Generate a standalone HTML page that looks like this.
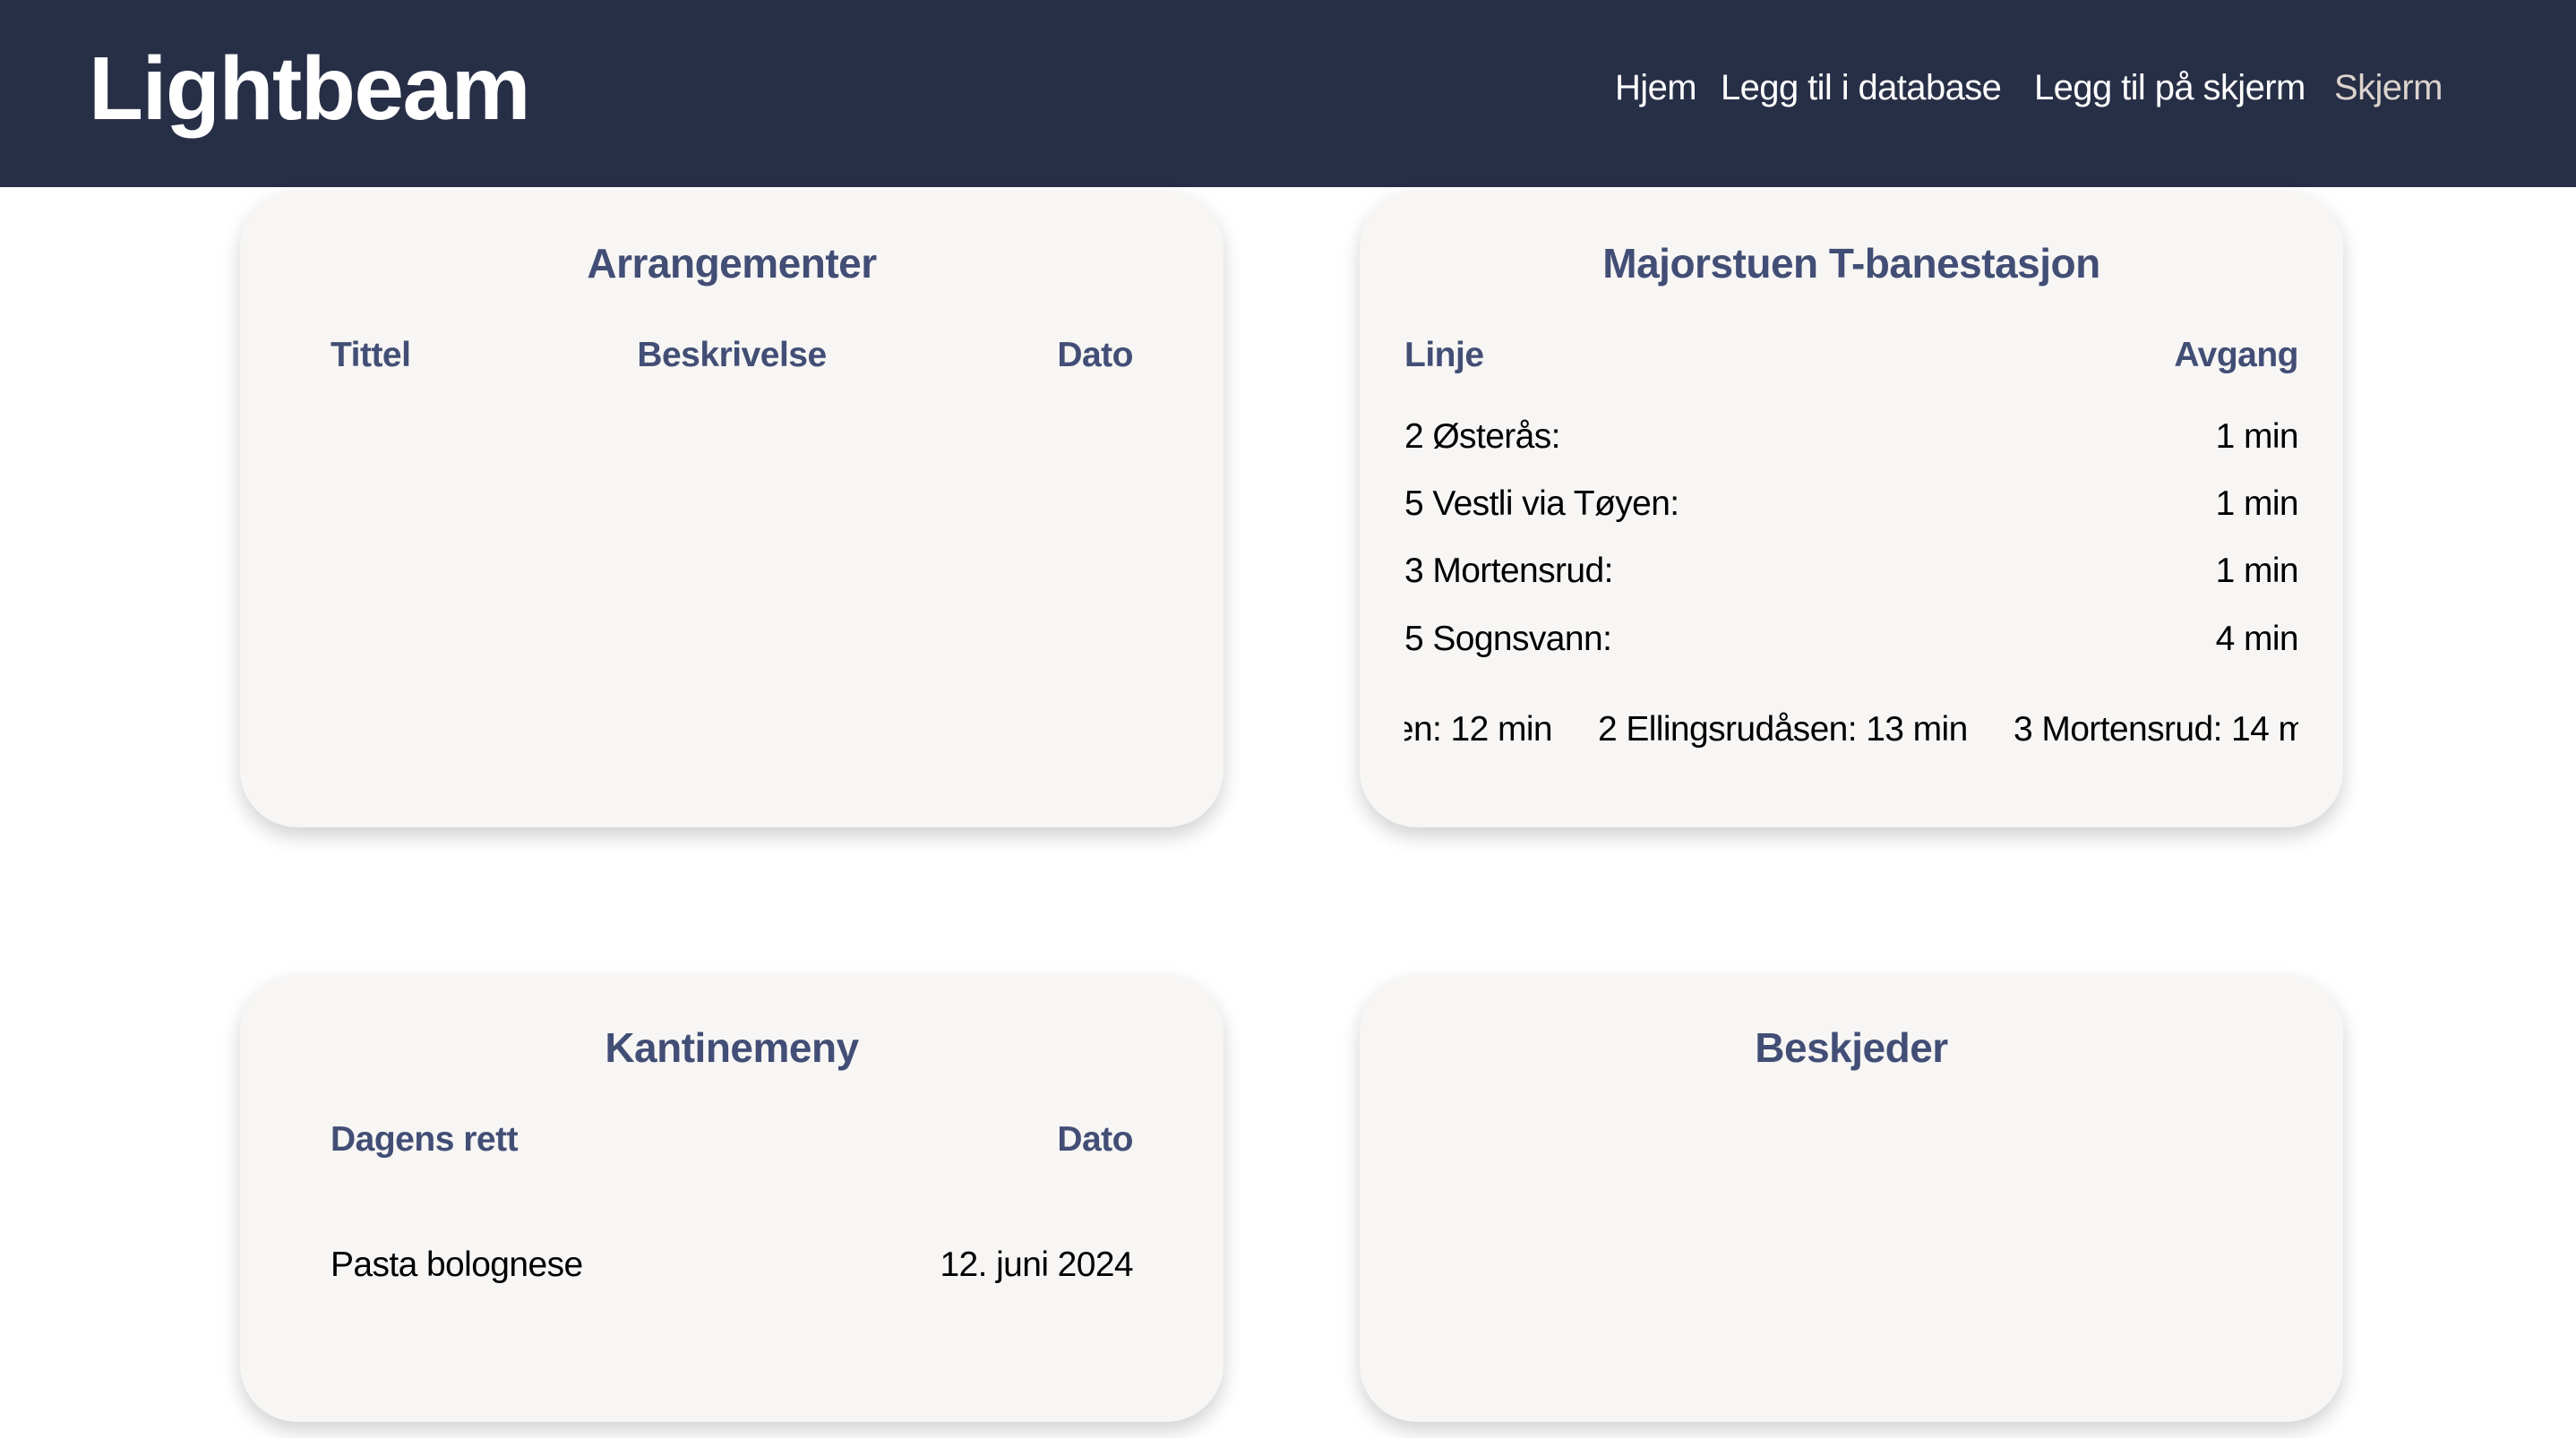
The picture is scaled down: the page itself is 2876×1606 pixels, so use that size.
<!DOCTYPE html>
<html><head><meta charset="utf-8"><style>
*{margin:0;padding:0;box-sizing:border-box}
body{width:2876px;height:1606px;background:#fff;font-family:"Liberation Sans",sans-serif;position:relative;overflow:hidden}
.hdr{position:absolute;left:0;top:0;width:2876px;height:209px;background:#272f47}
.logo{position:absolute;left:99px;top:42px;font-size:100px;font-weight:bold;color:#fff;letter-spacing:-1.5px}
.nav{position:absolute;top:76px;font-size:40px;color:#fff;letter-spacing:-0.6px;white-space:nowrap}
.card{position:absolute;background:#f7f6f4;border-radius:64px;box-shadow:0 10px 22px rgba(0,0,0,0.18)}
.t{position:absolute;left:0;right:0;text-align:center;font-size:46px;font-weight:bold;color:#424e75;letter-spacing:-0.5px}
.h{position:absolute;font-size:39px;font-weight:bold;color:#424e75;letter-spacing:-0.5px;white-space:nowrap}
.r{position:absolute;font-size:39px;color:#000;letter-spacing:-0.6px;white-space:nowrap}
.clip{position:absolute;left:50px;width:998px;top:580px;height:60px;overflow:hidden}
</style></head><body>
<div class="hdr">
<div class="logo">Lightbeam</div>
<div class="nav" style="left:1803px">Hjem</div>
<div class="nav" style="left:1921px">Legg til i database</div>
<div class="nav" style="left:2271px">Legg til på skjerm</div>
<div class="nav" style="left:2606px;color:#dcd3cc">Skjerm</div>
</div>

<div class="card" style="left:268px;top:213px;width:1098px;height:711px">
<div class="t" style="top:54px">Arrangementer</div>
<div class="h" style="left:101px;top:162px">Tittel</div>
<div class="h" style="left:0;right:0;text-align:center;top:162px">Beskrivelse</div>
<div class="h" style="right:101px;top:162px">Dato</div>
</div>

<div class="card" style="left:1518px;top:213px;width:1098px;height:711px">
<div class="t" style="top:54px">Majorstuen T-banestasjon</div>
<div class="h" style="left:50px;top:162px">Linje</div>
<div class="h" style="right:50px;top:162px">Avgang</div>
<div class="r" style="left:50px;top:253px">2 Østerås:</div><div class="r" style="right:50px;top:253px">1 min</div>
<div class="r" style="left:50px;top:328px">5 Vestli via Tøyen:</div><div class="r" style="right:50px;top:328px">1 min</div>
<div class="r" style="left:50px;top:403px">3 Mortensrud:</div><div class="r" style="right:50px;top:403px">1 min</div>
<div class="r" style="left:50px;top:479px">5 Sognsvann:</div><div class="r" style="right:50px;top:479px">4 min</div>
<div class="clip">
<div class="r" style="right:833px;top:0">2 Bergkrystallen: 12 min</div>
<div class="r" style="left:216px;top:0">2 Ellingsrudåsen: 13 min</div>
<div class="r" style="left:680px;top:0">3 Mortensrud: 14 min</div>
</div>
</div>

<div class="card" style="left:268px;top:1089px;width:1098px;height:499px">
<div class="t" style="top:54px">Kantinemeny</div>
<div class="h" style="left:101px;top:162px">Dagens rett</div>
<div class="h" style="right:101px;top:162px">Dato</div>
<div class="r" style="left:101px;top:302px">Pasta bolognese</div>
<div class="r" style="right:101px;top:302px">12. juni 2024</div>
</div>

<div class="card" style="left:1518px;top:1089px;width:1098px;height:499px">
<div class="t" style="top:54px">Beskjeder</div>
</div>
</body></html>
